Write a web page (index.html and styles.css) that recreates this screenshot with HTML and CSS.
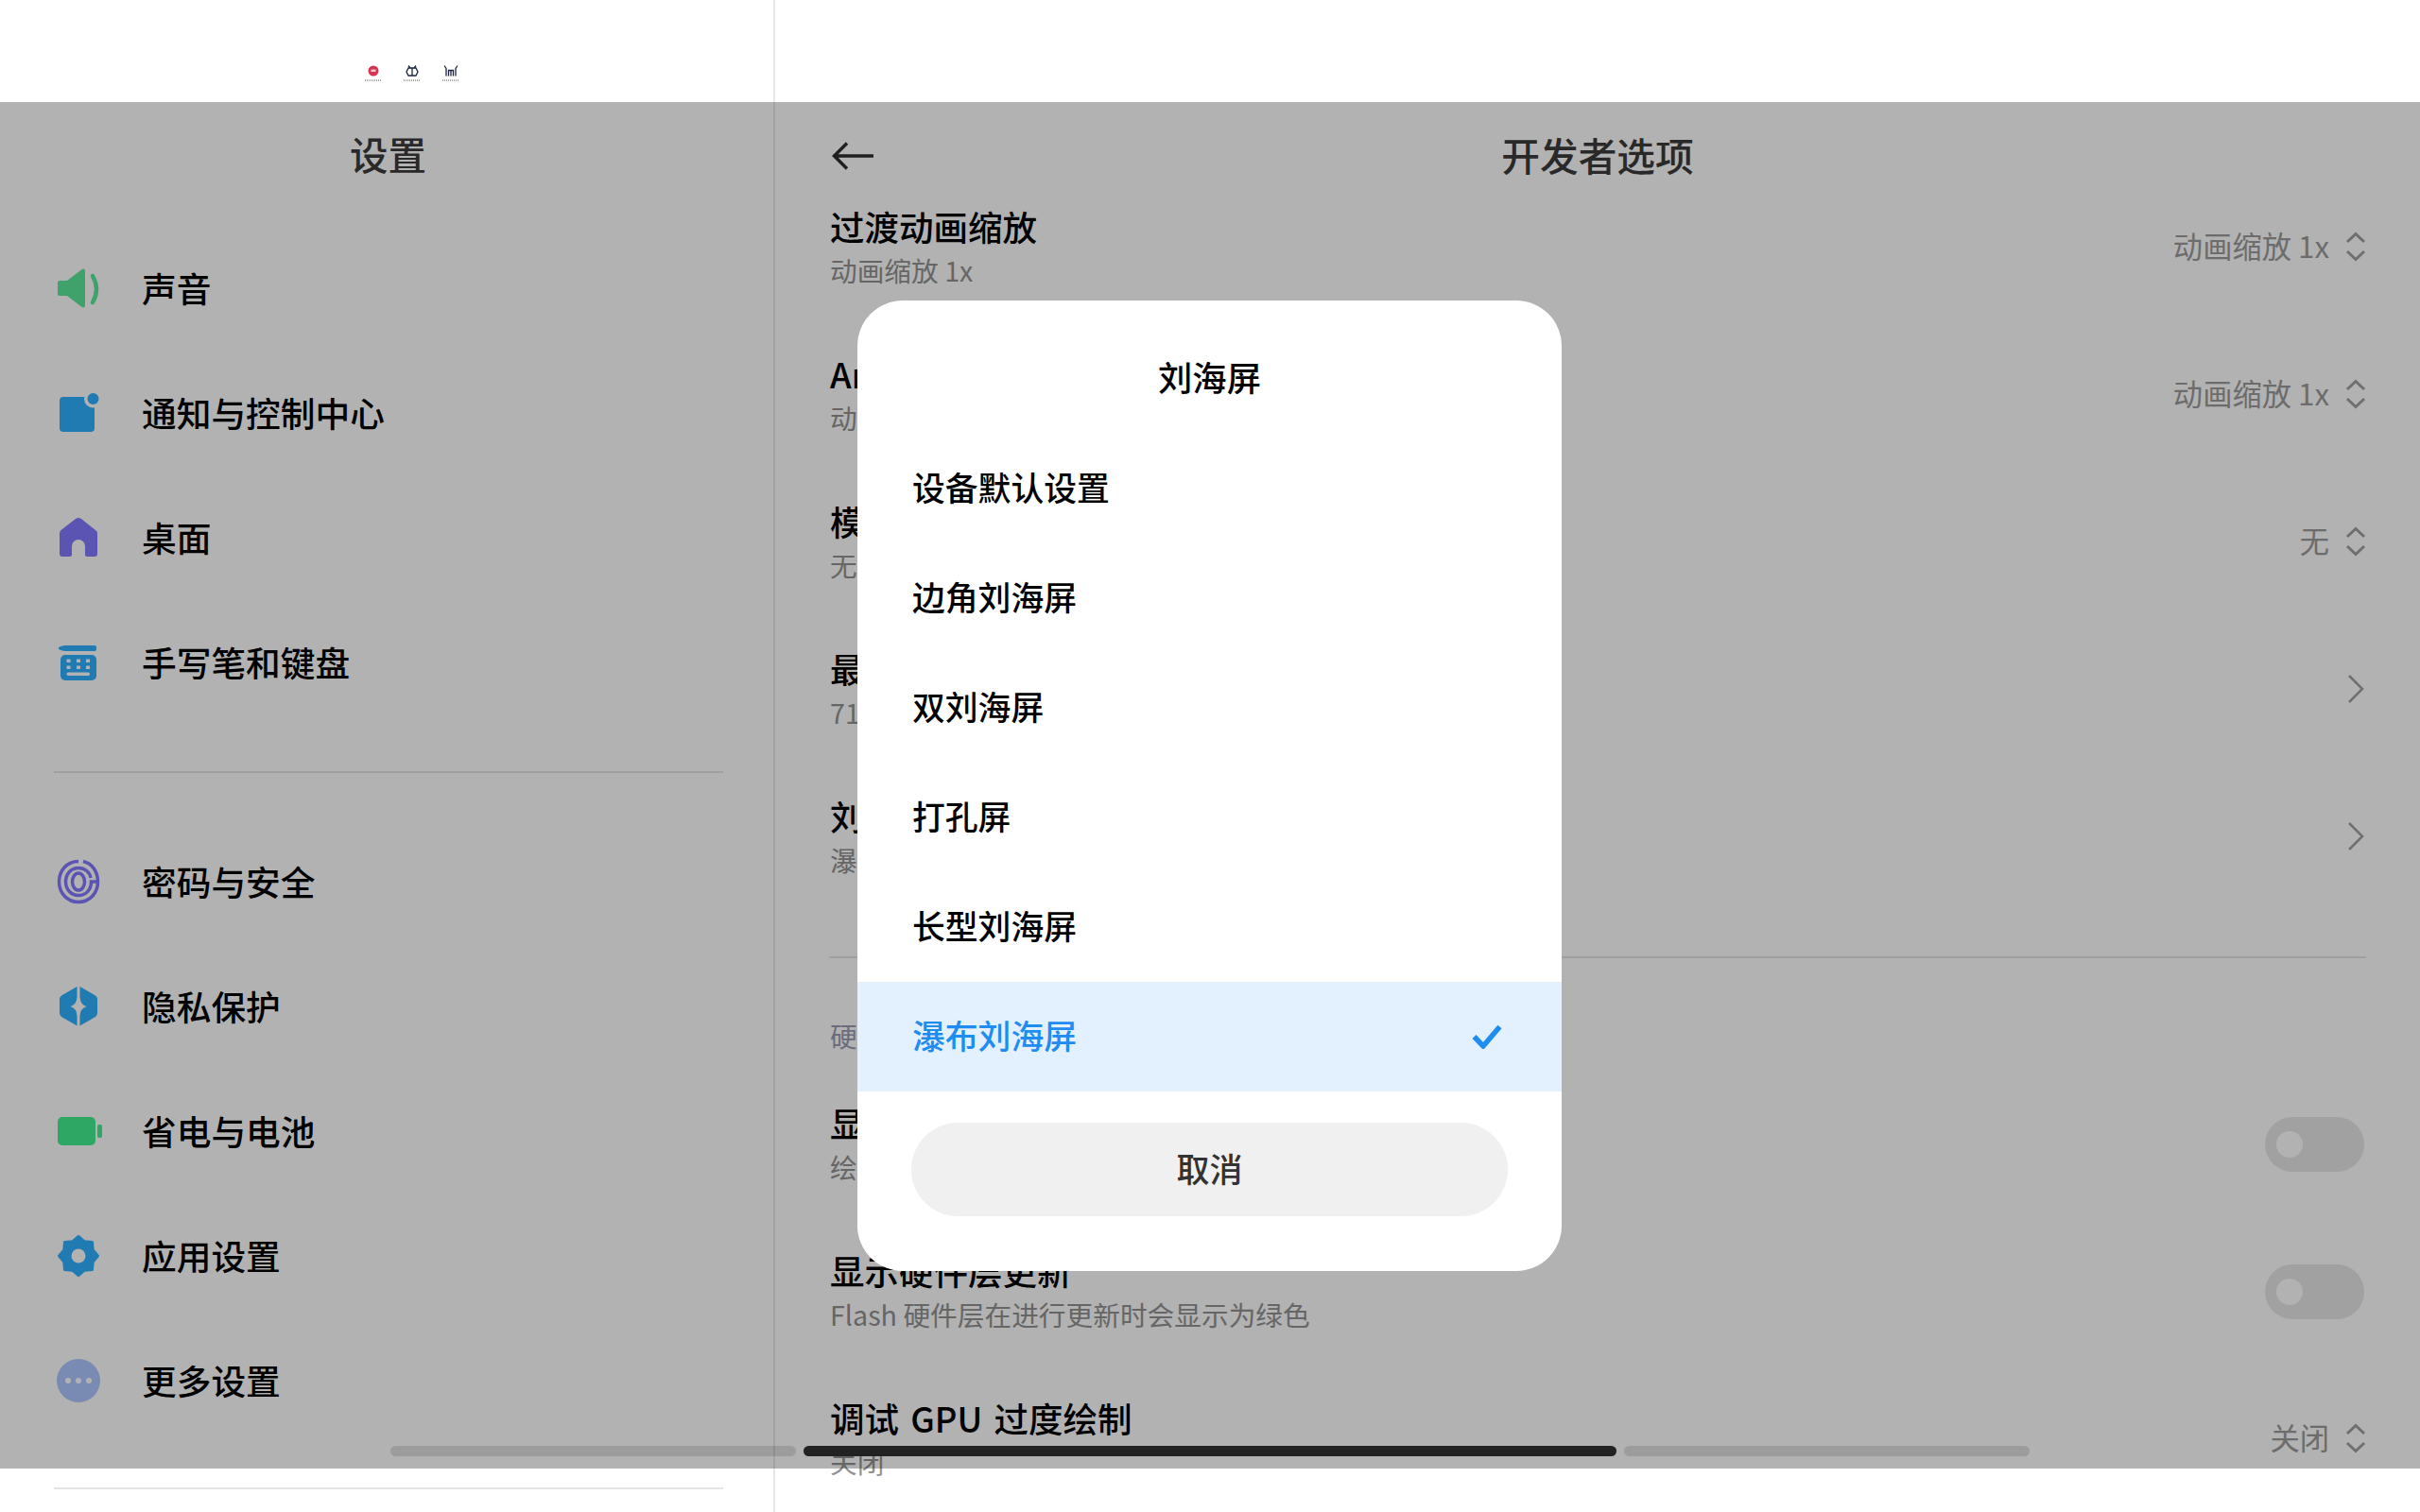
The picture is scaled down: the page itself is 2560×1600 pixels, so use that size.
FILE: index.html
```html
<!DOCTYPE html>
<html lang="zh-CN">
<head>
<meta charset="utf-8">
<title>开发者选项</title>
<link rel="stylesheet" href="styles.css">
</head>
<body>
<div class="app">
  <aside class="side">
    <div class="status">
      <svg class="tiny" viewBox="0 0 30 22"><circle cx="15" cy="7" r="5.500" fill="#d8324f"/><rect x="12.500" y="5.500" width="5" height="2.500" fill="#f6c9d0"/><line x1="6" y1="17" x2="24" y2="17" stroke="#555" stroke-width="1" stroke-dasharray="1 1"/></svg>
      <svg class="tiny" viewBox="0 0 30 22"><path d="M11 1.500l2 2.500h4l2-2.500M11 4h8l2 4-2 4h-8l-2-4zM15 4v8" fill="none" stroke="#1c2540" stroke-width="1.300"/><line x1="6" y1="17" x2="24" y2="17" stroke="#555" stroke-width="1" stroke-dasharray="1 1"/></svg>
      <svg class="tiny" viewBox="0 0 30 22"><path d="M8 1.500l2 3v8M22 1.500l-2 3v8M12.500 12.500V6.500h5v6M15 6.500v6" fill="none" stroke="#1c2540" stroke-width="1.300"/><line x1="6" y1="17" x2="24" y2="17" stroke="#555" stroke-width="1" stroke-dasharray="1 1"/></svg>
    </div>
    <h1 class="side-title">设置</h1>
    <ul class="menu">
      <li class="menu-item">
        <svg class="menu-icon" viewBox="0 0 52 52"><path class="green" d="M6 18h8L29 6.500Q33 4 33 8V44Q33 48 29 45.500L14 34H6Q4 34 4 32V20Q4 18 6 18Z"/><path class="green-line" d="M41 13Q49 27 41 41"/></svg>
        <span>声音</span>
      </li>
      <li class="menu-item">
        <svg class="menu-icon" viewBox="0 0 52 52"><rect class="blue" x="6" y="9" width="37" height="37" rx="4"/><circle cx="41.500" cy="11" r="9.500" fill="#fff"/><circle class="blue" cx="41.500" cy="11" r="6"/></svg>
        <span>通知与控制中心</span>
      </li>
      <li class="menu-item">
        <svg class="menu-icon" viewBox="0 0 52 52"><path class="purple" d="M23 6L7.500 18Q6 19.500 6 21V43Q6 46 9 46H17Q19 46 19 44V35A7 7 0 0 1 33 35V44Q33 46 35 46H43Q46 46 46 43V21Q46 19 44 18L29 6Q26 4 23 6Z"/></svg>
        <span>桌面</span>
      </li>
      <li class="menu-item">
        <svg class="menu-icon" viewBox="0 0 52 52"><path class="blue" d="M5 10Q9 8 12 8H43Q45 8 45 10V12Q45 14 43 14H12Q9 14 5 12Z"/><rect class="blue" x="7" y="18" width="38" height="27" rx="5"/><g fill="#fff"><rect x="13.500" y="22.500" width="4" height="3.500"/><rect x="24" y="22.500" width="4" height="3.500"/><rect x="34" y="22.500" width="4" height="3.500"/><rect x="13.500" y="29.500" width="4" height="3.500"/><rect x="24" y="29.500" width="4" height="3.500"/><rect x="34" y="29.500" width="4" height="3.500"/><rect x="13.500" y="36.500" width="24.500" height="3.500" rx="1.700"/></g></svg>
        <span>手写笔和键盘</span>
      </li>
    </ul>
    <hr class="side-rule">
    <ul class="menu menu-flush">
      <li class="menu-item">
        <svg class="menu-icon" viewBox="0 0 52 52"><g class="purple-line"><path d="M31 4.500C40 6.500 46.500 15 46.500 26C46.500 38 38 47.500 26 47.500C14 47.500 5.500 38 5.500 26C5.500 14 14 4.500 26 4.500"/><path d="M46 26H39.500C39.500 35 33.500 40.500 26 40.500C18 40.500 12.500 34 12.500 26C12.500 18 18 11.500 26 11.500C33 11.500 38 16 39 22"/><ellipse cx="26" cy="26" rx="6.500" ry="9"/></g></svg>
        <span>密码与安全</span>
      </li>
      <li class="menu-item">
        <svg class="menu-icon" viewBox="0 0 52 52"><path class="blue" d="M24.500 5L8 14.500Q6 16 6 18V33Q6 35.500 8 37L24.500 46.500V36Q24 28 17.500 26Q24 24 24.500 16Z"/><path class="blue" d="M27.500 5L44 14.500Q46 16 46 18V33Q46 35.500 44 37L27.500 46.500V36Q28 28 34.500 26Q28 24 27.500 16Z"/></svg>
        <span>隐私保护</span>
      </li>
      <li class="menu-item">
        <svg class="menu-icon" viewBox="0 0 52 52"><rect class="green2" x="4" y="11" width="40" height="30" rx="5"/><rect class="green2" x="46" y="19" width="5" height="14" rx="2"/></svg>
        <span>省电与电池</span>
      </li>
      <li class="menu-item">
        <svg class="menu-icon" viewBox="0 0 52 52"><polygon class="blue gear" points="26,5.500 32.300,10.800 40.500,11.500 41.200,19.700 46.500,26 41.200,32.300 40.500,40.500 32.300,41.200 26,46.500 19.700,41.200 11.500,40.500 10.800,32.300 5.500,26 10.800,19.700 11.500,11.500 19.700,10.800"/><circle cx="26" cy="26" r="7.500" fill="#fff"/></svg>
        <span>应用设置</span>
      </li>
      <li class="menu-item">
        <svg class="menu-icon" viewBox="0 0 52 52"><circle cx="26" cy="26" r="23" fill="#aec8ff"/><g fill="#fff"><circle cx="15" cy="26" r="3"/><circle cx="26" cy="26" r="3"/><circle cx="37" cy="26" r="3"/></g></svg>
        <span>更多设置</span>
      </li>
    </ul>
    <hr class="side-rule side-rule-end">
  </aside>

  <main class="main">
    <div class="status"></div>
    <header class="head">
      <svg class="back" viewBox="0 0 46 32"><path d="M17 2.500L3.500 16 17 29.500M3.500 16H45"/></svg>
      <h1 class="head-title">开发者选项</h1>
    </header>
    <section class="rows">
      <div class="row">
        <div class="row-text"><div class="row-title">过渡动画缩放</div><div class="row-sub">动画缩放 1x</div></div>
        <div class="row-value"><span>动画缩放 1x</span><svg class="updown" viewBox="0 0 22 32"><path d="M2 11L11 2.500 20 11M2 21L11 29.500 20 21"/></svg></div>
      </div>
      <div class="row">
        <div class="row-text"><div class="row-title">Animator 时长缩放</div><div class="row-sub">动画缩放 1x</div></div>
        <div class="row-value"><span>动画缩放 1x</span><svg class="updown" viewBox="0 0 22 32"><path d="M2 11L11 2.500 20 11M2 21L11 29.500 20 21"/></svg></div>
      </div>
      <div class="row">
        <div class="row-text"><div class="row-title">模拟辅助显示设备</div><div class="row-sub">无</div></div>
        <div class="row-value"><span>无</span><svg class="updown" viewBox="0 0 22 32"><path d="M2 11L11 2.500 20 11M2 21L11 29.500 20 21"/></svg></div>
      </div>
      <div class="row">
        <div class="row-text"><div class="row-title">最小宽度</div><div class="row-sub">712 dp</div></div>
        <svg class="next" viewBox="0 0 18 32"><path d="M2 2L16 16 2 30"/></svg>
      </div>
      <div class="row">
        <div class="row-text"><div class="row-title">刘海屏</div><div class="row-sub">瀑布刘海屏</div></div>
        <svg class="next" viewBox="0 0 18 32"><path d="M2 2L16 16 2 30"/></svg>
      </div>
      <hr class="rule">
      <div class="section-label">硬件加速渲染</div>
      <div class="row">
        <div class="row-text"><div class="row-title">显示面（surface）更新</div><div class="row-sub">绘制时闪烁显示窗口表面</div></div>
        <div class="toggle"><span class="knob"></span></div>
      </div>
      <div class="row">
        <div class="row-text"><div class="row-title">显示硬件层更新</div><div class="row-sub">Flash 硬件层在进行更新时会显示为绿色</div></div>
        <div class="toggle"><span class="knob"></span></div>
      </div>
      <div class="row">
        <div class="row-text"><div class="row-title">调试 GPU 过度绘制</div><div class="row-sub">关闭</div></div>
        <div class="row-value"><span>关闭</span><svg class="updown" viewBox="0 0 22 32"><path d="M2 11L11 2.500 20 11M2 21L11 29.500 20 21"/></svg></div>
      </div>
    </section>
  </main>
</div>

<div class="scrim">
  <div class="dialog">
    <div class="dialog-title">刘海屏</div>
    <div class="option"><span>设备默认设置</span></div>
    <div class="option"><span>边角刘海屏</span></div>
    <div class="option"><span>双刘海屏</span></div>
    <div class="option"><span>打孔屏</span></div>
    <div class="option"><span>长型刘海屏</span></div>
    <div class="option option-on"><span>瀑布刘海屏</span><svg class="check" viewBox="0 0 32 26"><path d="M2.500 13L12 23 29.500 2.500"/></svg></div>
    <button class="cancel">取消</button>
  </div>
  <div class="pager">
    <span class="pill"></span>
    <span class="pill pill-on"></span>
    <span class="pill"></span>
  </div>
</div>
</body>
</html>
```
FILE: styles.css
```css
* { box-sizing: border-box; }
html, body { margin: 0; height: 100%; overflow: hidden; background: #fff; }
body {
  width: 2560px; height: 1600px; position: relative;
  font-family: "Noto Sans CJK SC", "Noto Sans", sans-serif;
  color: #000;
}
ul { list-style: none; margin: 0; padding: 0; }
h1 { margin: 0; font-weight: 500; }
hr { border: 0; margin: 0; }

.app { display: flex; width: 2560px; height: 1600px; overflow: hidden; }

/* sidebar */
.side { width: 820px; flex: none; border-right: 2px solid #e8e8e8; }
.status { height: 108px; display: flex; justify-content: center; gap: 11px; padding: 68px 0 0 54px; }
.tiny { width: 30px; height: 22px; }
.side-title { height: 114px; line-height: 110px; text-align: center; font-size: 40.500px; color: #3c3c3c; padding-left: 3px; }
.menu { margin-top: 17px; }
.menu-flush { margin-top: 0; }
.menu-item { height: 132px; display: flex; align-items: center; gap: 41px; padding-left: 57px; font-size: 36.700px; font-weight: 500; }
.menu-item span { margin-bottom: 3px; }
.menu-icon { width: 52px; height: 52px; flex: none; }
.side-rule { height: 2px; margin: 49px 53px 49px 57px; background: #e4e4e4; }
.side-rule-end { margin-top: 47px; }

.green { fill: #59e999; }
.green-line { fill: none; stroke: #59e999; stroke-width: 4.500; stroke-linecap: round; }
.green2 { fill: #43ef90; }
.blue { fill: #2eb0ff; }
.gear { stroke: #2eb0ff; stroke-width: 3; stroke-linejoin: round; }
.purple { fill: #8579ff; }
.purple-line { fill: none; stroke: #8579ff; stroke-width: 3.500; }

/* main pane */
.main { flex: 1; min-width: 0; padding: 0 57px 0 57px; }
.main .status { padding: 0; }
.head { height: 114px; display: grid; grid-template-columns: 1fr auto 1fr; align-items: center; }
.back { width: 46px; height: 32px; fill: none; stroke: #2e2e2e; stroke-width: 3.500; margin-left: 2px; }
.head-title { font-size: 40.700px; color: #3c3c3c; margin-bottom: 4px; }
.rows { margin-top: -39px; }
.row { height: 156px; display: flex; align-items: center; justify-content: space-between; }
.row-text { padding-top: 1px; margin-left: 1px; white-space: nowrap; }
.row-title { font-size: 36.500px; font-weight: 500; line-height: 48px; word-spacing: 4px; }
.row-sub { font-size: 28.700px; line-height: 44px; color: #929292; }
.row-value { display: flex; align-items: center; gap: 17px; font-size: 31.300px; color: #9b9b9b; }
.row-value span { margin-bottom: 4px; }
.updown { width: 22px; height: 32px; fill: none; stroke: #a0a0a0; stroke-width: 3; }
.next { width: 18px; height: 32px; fill: none; stroke: #a0a0a0; stroke-width: 2.500; margin-right: 2px; }
.rule { height: 2px; margin-top: 49px; background: #e4e4e4; }
.section-label { font-size: 28.700px; line-height: 40px; padding: 62px 0 16px; color: #9a9bb4; margin-left: 1px; }
.toggle { width: 105px; height: 58px; border-radius: 29px; background: #e7e7e7; padding: 15px 0 0 12px; margin: 2px 2px 0 0; }
.knob { display: block; width: 28px; height: 28px; border-radius: 50%; background: #fff; }

/* scrim + dialog */
.scrim {
  position: absolute; left: 0; top: 108px; width: 2560px; height: 1446px;
  background: rgba(0, 0, 0, .3);
  display: flex; align-items: center; justify-content: center;
}
.dialog { width: 745px; height: 1027px; margin-right: 1px; background: #fff; border-radius: 48px; overflow: hidden; }
.dialog-title { height: 141px; padding-top: 34px; line-height: 92px; text-align: center; font-size: 36.300px; font-weight: 500; }
.option { height: 116px; padding: 0 58px; display: flex; align-items: center; justify-content: space-between; font-size: 34.800px; font-weight: 500; }
.option span { margin-bottom: 4px; }
.option-on { background: #e3f0fd; color: #1e8cf0; }
.check { width: 32px; height: 26px; fill: none; stroke: #1e8cf0; stroke-width: 5.500; margin-right: 5px; }
.cancel {
  display: block; width: 631px; height: 99px; margin: 33px auto 0;
  padding: 0 0 4px;
  border: 0; border-radius: 50px; background: #f0f0f0; color: #333;
  font: 500 35px "Noto Sans CJK SC", sans-serif;
}

/* pager */
.pager { position: absolute; left: 0; right: 0; bottom: 13px; display: flex; justify-content: center; gap: 8px; }
.pill { width: 429px; height: 11px; border-radius: 6px; background: rgba(0, 0, 0, .12); }
.pill-on { width: 860px; background: #222; }
```
